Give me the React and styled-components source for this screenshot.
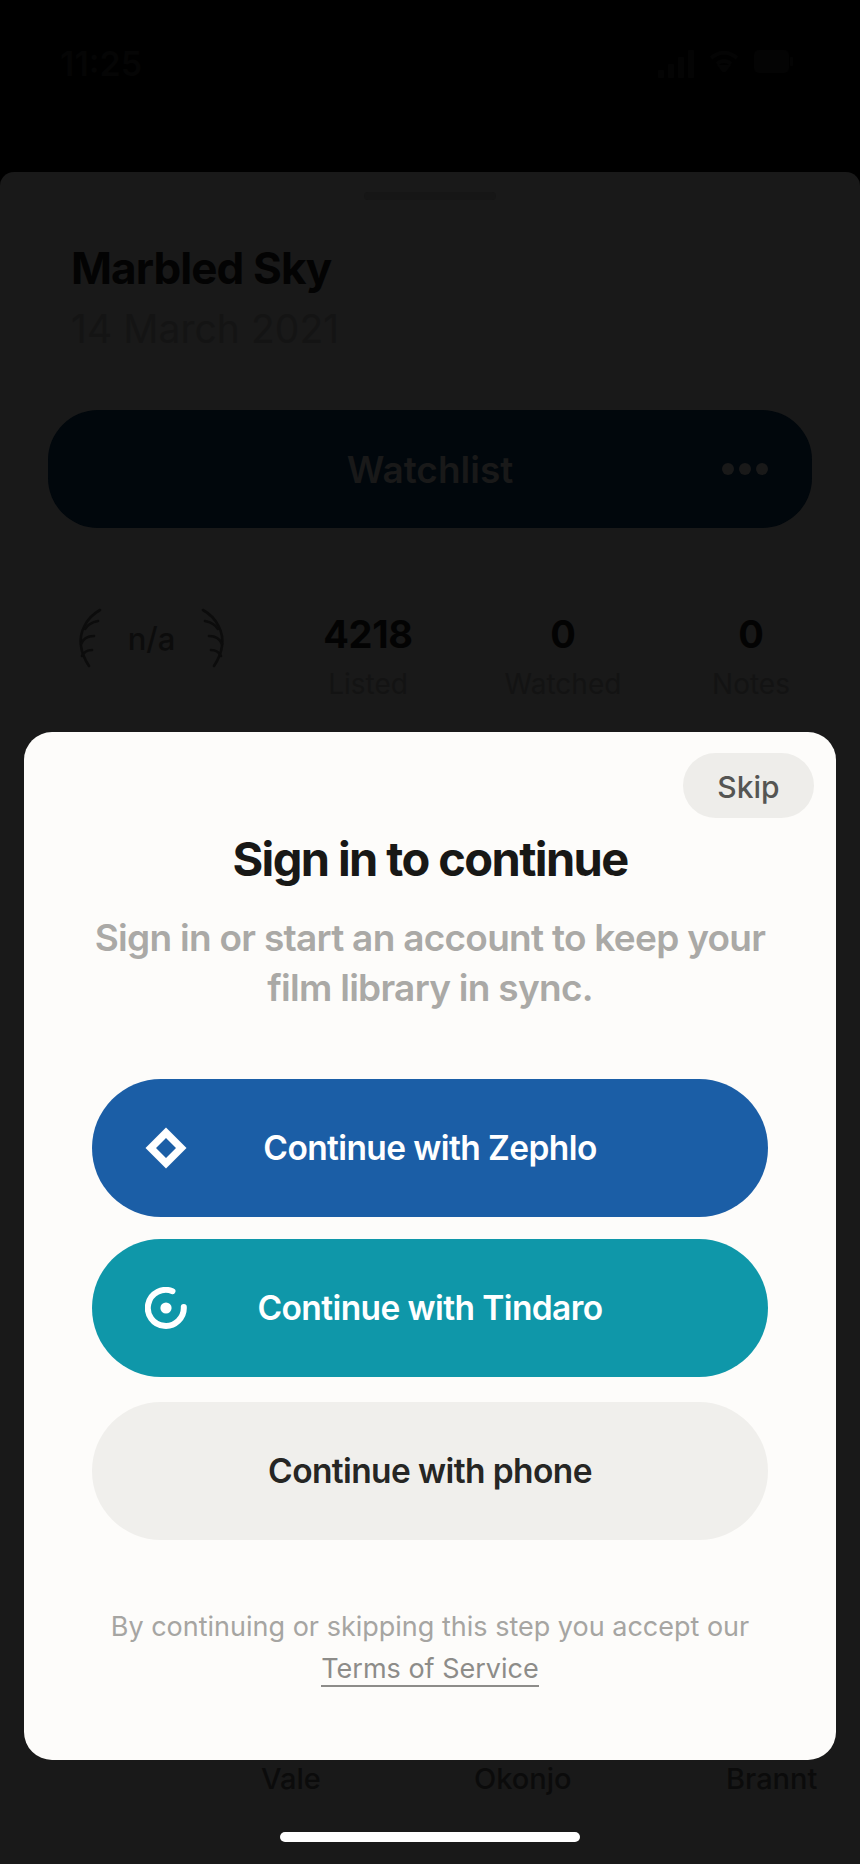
import React from "react";
import styled, { createGlobalStyle } from "styled-components";

const GlobalStyle = createGlobalStyle`
  html, body {
    margin: 0;
    background: #000;
  }
  * {
    box-sizing: border-box;
  }
`;

const Screen = styled.div`
  position: relative;
  width: 860px;
  height: 1864px;
  overflow: hidden;
  background: #000;
  font-family: Inter, "Liberation Sans", sans-serif;
`;

const StatusBar = styled.div`
  height: 172px;
  padding: 44px 67px 0 60px;
  display: flex;
  justify-content: space-between;
  align-items: flex-start;
  color: #050505;
`;

const Clock = styled.span`
  font-size: 34px;
  font-weight: 600;
  line-height: 40px;
`;

const StatusIcons = styled.div`
  display: flex;
  align-items: flex-start;
  gap: 15px;
  margin-top: 6px;
`;

const Sheet = styled.div`
  height: 1692px;
  background: #191919;
  border-radius: 14px 14px 0 0;
  padding-top: 20px;
`;

const Grabber = styled.div`
  width: 132px;
  height: 8px;
  margin: 0 auto;
  border-radius: 4px;
  background: #161616;
`;

const Heading = styled.div`
  padding: 43px 71px 0;
`;

const Title = styled.div`
  font-size: 44px;
  line-height: 50px;
  font-weight: 700;
  letter-spacing: -0.9px;
  color: #030303;
`;

const DateLine = styled.div`
  margin-top: 13px;
  font-size: 39px;
  line-height: 46px;
  letter-spacing: 0.05px;
  color: #141414;
`;

const Watchlist = styled.div`
  position: relative;
  margin: 58px 48px 0;
  height: 118px;
  border-radius: 50px;
  background: #01070c;
  display: flex;
  align-items: center;
  justify-content: center;
  font-size: 37px;
  font-weight: 600;
  color: #191919;
`;

const Dots = styled.div`
  position: absolute;
  right: 44px;
  top: 50%;
  transform: translateY(-50%);
  display: flex;
  gap: 5px;
`;

const Dot = styled.span`
  width: 12px;
  height: 12px;
  border-radius: 50%;
  background: #191919;
`;

const Stats = styled.div`
  margin-top: 84px;
  padding-left: 78px;
  display: grid;
  grid-template-columns: 175px 230px 160px 216px;
  align-items: start;
`;

const Rating = styled.div`
  width: 147px;
  margin-top: -4px;
  display: flex;
  align-items: center;
  justify-content: space-between;
  height: 60px;
  font-size: 31px;
  font-weight: 500;
  color: #0c0c0c;
`;

const Stat = styled.div`
  display: flex;
  flex-direction: column;
  align-items: center;
`;

const StatValue = styled.div`
  font-size: 38px;
  line-height: 44px;
  font-weight: 700;
  letter-spacing: -0.3px;
  color: #030303;
`;

const StatLabel = styled.div`
  margin-top: 11px;
  font-size: 28px;
  line-height: 34px;
  color: #131313;
`;

const People = styled.div`
  position: absolute;
  left: 0;
  right: 0;
  top: 1760px;
`;

const Person = styled.span`
  position: absolute;
  top: 0;
  left: ${(p) => p.$x}px;
  font-size: 29px;
  line-height: 38px;
  font-weight: 500;
  color: #0b0b0b;
`;

const Modal = styled.div`
  position: absolute;
  left: 24px;
  top: 732px;
  width: 812px;
  height: 1028px;
  padding: 21px 22px 0;
  border-radius: 28px;
  background: #fdfcfa;
  display: flex;
  flex-direction: column;
  align-items: center;
`;

const Skip = styled.button`
  align-self: flex-end;
  width: 131px;
  height: 65px;
  border: 0;
  border-radius: 33px;
  background: #eeedea;
  font: 500 30px Inter, sans-serif;
  color: #555553;
  padding: 2px 0 0;
`;

const ModalTitle = styled.h2`
  margin: 14px 0 0;
  font-size: 47px;
  line-height: 54px;
  font-weight: 700;
  letter-spacing: -1.6px;
  color: #181816;
`;

const Lead = styled.p`
  margin: 27px 0 0;
  font-size: 37px;
  line-height: 50px;
  font-weight: 600;
  letter-spacing: -0.72px;
  text-align: center;
  color: #aaa9a6;
`;

const Buttons = styled.div`
  margin-top: 66px;
  width: 676px;
  display: flex;
  flex-direction: column;
  gap: 22px;
`;

const AuthButton = styled.button`
  position: relative;
  height: 138px;
  border: 0;
  border-radius: 69px;
  background: ${(p) => p.$bg};
  color: ${(p) => p.$fg};
  font: 600 33.5px Inter, sans-serif;
  letter-spacing: -0.6px;
  display: flex;
  align-items: center;
  justify-content: center;
  &:last-child {
    margin-top: 3px;
  }
`;

const ButtonIcon = styled.svg`
  position: absolute;
  left: 53px;
  top: 48px;
  width: 42px;
  height: 42px;
`;

const Legal = styled.div`
  margin-top: 66px;
  font-size: 27px;
  line-height: 42px;
  text-align: center;
  color: #a6a5a2;
`;

const TermsLink = styled.a`
  display: inline-block;
  line-height: 33px;
  border-bottom: 2px solid #8d8c89;
  color: #8d8c89;
`;

const HomeBar = styled.div`
  position: absolute;
  left: 280px;
  top: 1832px;
  width: 300px;
  height: 10px;
  border-radius: 5px;
  background: #fff;
`;

const Laurel = ({ flip }) => (
  <svg width="26" height="60" viewBox="0 0 26 60" fill="none" stroke="#0c0c0c" strokeWidth="2.6" strokeLinecap="round"
    style={flip ? { transform: "scaleX(-1)" } : undefined}>
    <path d="M22 2C8 10 1 24 3 38c1 8 4 14 8 20" />
    <path d="M7 21c3-5 8-7 13-8" />
    <path d="M3 36c2-5 7-8 13-8" />
    <path d="M4 48c2-4 5-6 10-6" />
  </svg>
);

export default function App() {
  return (
    <>
      <GlobalStyle />
      <Screen>
        <StatusBar>
          <Clock>11:25</Clock>
          <StatusIcons>
            <svg width="36" height="28" viewBox="0 0 36 28" fill="#040404">
              <rect x="0" y="20" width="6" height="8" rx="1" />
              <rect x="10" y="14" width="6" height="14" rx="1" />
              <rect x="20" y="7" width="6" height="21" rx="1" />
              <rect x="30" y="0" width="6" height="28" rx="1" />
            </svg>
            <svg width="30" height="22" viewBox="0 0 30 22" fill="none" stroke="#040404" strokeWidth="4">
              <path d="M2 8c8-7 18-7 26 0" />
              <path d="M8 14c4-4 10-4 14 0" />
              <path d="M15 21l-3-4h6z" fill="#040404" />
            </svg>
            <svg width="39" height="24" viewBox="0 0 39 24" fill="#040404">
              <rect x="0" y="0" width="35" height="23" rx="5" />
              <rect x="36" y="7" width="3" height="9" rx="1" />
            </svg>
          </StatusIcons>
        </StatusBar>
        <Sheet>
          <Grabber />
          <Heading>
            <Title>Marbled Sky</Title>
            <DateLine>14 March 2021</DateLine>
          </Heading>
          <Watchlist>
            Watchlist
            <Dots>
              <Dot />
              <Dot />
              <Dot />
            </Dots>
          </Watchlist>
          <Stats>
            <Rating>
              <Laurel />
              n/a
              <Laurel flip />
            </Rating>
            <Stat>
              <StatValue>4218</StatValue>
              <StatLabel>Listed</StatLabel>
            </Stat>
            <Stat>
              <StatValue>0</StatValue>
              <StatLabel>Watched</StatLabel>
            </Stat>
            <Stat>
              <StatValue>0</StatValue>
              <StatLabel>Notes</StatLabel>
            </Stat>
          </Stats>
        </Sheet>
        <People>
          <Person $x={261}>Vale</Person>
          <Person $x={474}>Okonjo</Person>
          <Person $x={726}>Brannt</Person>
        </People>
        <Modal>
          <Skip>Skip</Skip>
          <ModalTitle>Sign in to continue</ModalTitle>
          <Lead>
            Sign in or start an account to keep your
            <br />
            film library in sync.
          </Lead>
          <Buttons>
            <AuthButton $bg="#1b5ea6" $fg="#fff">
              <ButtonIcon viewBox="0 0 42 42">
                <path fill="#fff" fillRule="evenodd" d="M21 0.5 41.5 21 21 41.5 0.5 21ZM21 11 11 21 21 31 31 21Z" />
              </ButtonIcon>
              Continue with Zephlo
            </AuthButton>
            <AuthButton $bg="#0f97a9" $fg="#fff">
              <ButtonIcon viewBox="0 0 42 42">
                <path fill="none" stroke="#fff" strokeWidth="6" strokeLinecap="round" d="M27.5 4.2A18 18 0 1 0 38.8 20" />
                <circle cx="21" cy="21" r="5.6" fill="#fff" />
              </ButtonIcon>
              Continue with Tindaro
            </AuthButton>
            <AuthButton $bg="#f0efec" $fg="#262624">
              Continue with phone
            </AuthButton>
          </Buttons>
          <Legal>
            By continuing or skipping this step you accept our
            <br />
            <TermsLink>Terms of Service</TermsLink>
          </Legal>
        </Modal>
        <HomeBar />
      </Screen>
    </>
  );
}
